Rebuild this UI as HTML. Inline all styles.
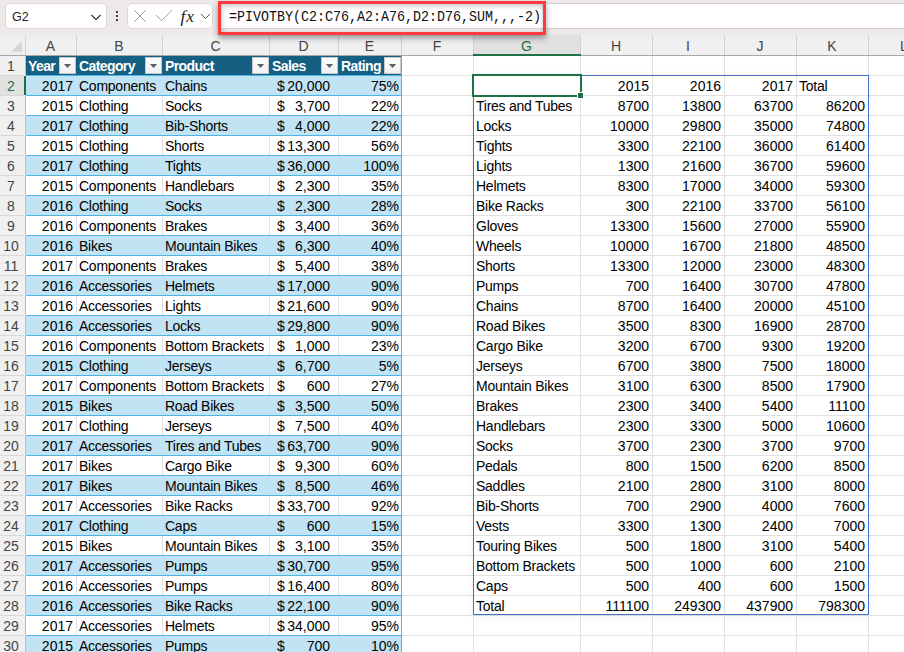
<!DOCTYPE html>
<html><head><meta charset="utf-8"><style>
html,body{margin:0;padding:0;}
body{width:904px;height:652px;overflow:hidden;position:relative;background:#fff;font-family:"Liberation Sans",sans-serif;color:#000;}
.a{position:absolute;}
.t{position:absolute;white-space:nowrap;font-size:14px;line-height:20px;height:20px;}
.tx{letter-spacing:-0.25px;}
.r{text-align:right;}
.hb{font-weight:bold;color:#fff;letter-spacing:-0.6px;}
.vl{position:absolute;width:1px;}
.hl{position:absolute;height:1px;}
</style></head><body>

<div class="a" style="left:0;top:0;width:904px;height:35px;background:#eee8e8"></div>
<div class="a" style="left:220px;top:3px;width:690px;height:24px;background:#fff;border-top:1px solid #d6d2d2;border-bottom:1px solid #d6d2d2"></div>
<div class="a" style="left:5px;top:3px;width:100px;height:24px;background:#fff;border:1px solid #dcd8d8;border-radius:5px"></div>
<div class="t" style="left:12px;top:6.5px;font-size:12.5px;color:#222">G2</div>
<svg class="a" style="left:90px;top:13px" width="12" height="9" viewBox="0 0 12 9"><path d="M1.5 2 L6 6.5 L10.5 2" fill="none" stroke="#333" stroke-width="1.2"/></svg>
<div class="a" style="left:116.2px;top:11.3px;width:2.2px;height:2.2px;background:#333;border-radius:0.5px"></div>
<div class="a" style="left:116.2px;top:15.3px;width:2.2px;height:2.2px;background:#333;border-radius:0.5px"></div>
<div class="a" style="left:116.2px;top:19.3px;width:2.2px;height:2.2px;background:#333;border-radius:0.5px"></div>
<div class="a" style="left:127px;top:3px;width:84px;height:24px;background:#fff;border:1px solid #dcd8d8;border-radius:5px"></div>
<svg class="a" style="left:130px;top:6px" width="84" height="20" viewBox="0 0 84 20"><path d="M4 4 L16 16 M16 4 L4 16" stroke="#9a9a9a" stroke-width="0.9" fill="none"/><path d="M26 9 L31.5 14.5 L42 4.2" stroke="#9a9a9a" stroke-width="0.9" fill="none"/><path d="M71 8 L75.5 12.5 L80 8" stroke="#555" stroke-width="1" fill="none"/></svg>
<div class="t" style="left:180px;top:4px;font-family:'Liberation Serif',serif;font-style:italic;font-size:17.5px;line-height:22px;height:22px;color:#1a1a1a;letter-spacing:0.8px;left:180.5px;top:4.5px">fx</div>
<div class="a" style="left:218px;top:1px;width:322px;height:28px;border:3px solid #fa3a3d;box-shadow:0 3px 6px rgba(0,0,0,0.38), inset 2px 3px 4px rgba(0,0,0,0.16), inset -2px 0 3px rgba(0,0,0,0.1);z-index:10"></div>
<div class="t" style="left:229px;top:8px;font-family:'Liberation Mono',monospace;font-size:13.33px;line-height:20px;color:#111;transform:scaleY(1.07);z-index:11">=PIVOTBY(C2:C76,A2:A76,D2:D76,SUM,,,-2)</div>
<div class="a" style="left:0;top:35px;width:904px;height:20px;background:#f0f0f0"></div>
<div class="a" style="left:473px;top:35px;width:107px;height:20px;background:#e1e1e1"></div>
<svg class="a" style="left:10px;top:40px" width="14" height="13"><path d="M1 12 L12 1 L12 12 Z" fill="#d7d7d7"/></svg>
<div class="vl" style="left:25px;top:36px;height:19px;background:#d0d0d0"></div>
<div class="t" style="left:25px;width:51px;top:36px;text-align:center;color:#444">A</div>
<div class="vl" style="left:76px;top:36px;height:19px;background:#d0d0d0"></div>
<div class="t" style="left:76px;width:86px;top:36px;text-align:center;color:#444">B</div>
<div class="vl" style="left:162px;top:36px;height:19px;background:#d0d0d0"></div>
<div class="t" style="left:162px;width:107px;top:36px;text-align:center;color:#444">C</div>
<div class="vl" style="left:269px;top:36px;height:19px;background:#d0d0d0"></div>
<div class="t" style="left:269px;width:69px;top:36px;text-align:center;color:#444">D</div>
<div class="vl" style="left:338px;top:36px;height:19px;background:#d0d0d0"></div>
<div class="t" style="left:338px;width:63px;top:36px;text-align:center;color:#444">E</div>
<div class="vl" style="left:401px;top:36px;height:19px;background:#d0d0d0"></div>
<div class="t" style="left:401px;width:72px;top:36px;text-align:center;color:#444">F</div>
<div class="vl" style="left:473px;top:36px;height:19px;background:#d0d0d0"></div>
<div class="t" style="left:473px;width:107px;top:36px;text-align:center;color:#217346">G</div>
<div class="vl" style="left:580px;top:36px;height:19px;background:#d0d0d0"></div>
<div class="t" style="left:580px;width:72px;top:36px;text-align:center;color:#444">H</div>
<div class="vl" style="left:652px;top:36px;height:19px;background:#d0d0d0"></div>
<div class="t" style="left:652px;width:72px;top:36px;text-align:center;color:#444">I</div>
<div class="vl" style="left:724px;top:36px;height:19px;background:#d0d0d0"></div>
<div class="t" style="left:724px;width:72px;top:36px;text-align:center;color:#444">J</div>
<div class="vl" style="left:796px;top:36px;height:19px;background:#d0d0d0"></div>
<div class="t" style="left:796px;width:72px;top:36px;text-align:center;color:#444">K</div>
<div class="vl" style="left:868px;top:36px;height:19px;background:#d0d0d0"></div>
<div class="t" style="left:868px;width:72px;top:36px;text-align:center;color:#444">L</div>
<div class="hl" style="left:0;top:55px;width:904px;background:#a8a8a8"></div>
<div class="a" style="left:473px;top:54px;width:108px;height:2px;background:#1e7145"></div>
<div class="a" style="left:0;top:56px;width:25px;height:600px;background:#f0f0f0"></div>
<div class="a" style="left:0;top:76px;width:25px;height:19px;background:#e1e1e1"></div>
<div class="vl" style="left:25px;top:56px;height:600px;background:#bdbdbd"></div>
<div class="a" style="left:24px;top:76px;width:2px;height:19px;background:#1e7145"></div>
<div class="hl" style="left:0;top:75px;width:24px;background:#d8d8d8"></div>
<div class="t" style="left:0;width:22px;top:56px;text-align:center;color:#444">1</div>
<div class="hl" style="left:0;top:95px;width:24px;background:#d8d8d8"></div>
<div class="t" style="left:0;width:22px;top:76px;text-align:center;color:#217346">2</div>
<div class="hl" style="left:0;top:115px;width:24px;background:#d8d8d8"></div>
<div class="t" style="left:0;width:22px;top:96px;text-align:center;color:#444">3</div>
<div class="hl" style="left:0;top:135px;width:24px;background:#d8d8d8"></div>
<div class="t" style="left:0;width:22px;top:116px;text-align:center;color:#444">4</div>
<div class="hl" style="left:0;top:155px;width:24px;background:#d8d8d8"></div>
<div class="t" style="left:0;width:22px;top:136px;text-align:center;color:#444">5</div>
<div class="hl" style="left:0;top:175px;width:24px;background:#d8d8d8"></div>
<div class="t" style="left:0;width:22px;top:156px;text-align:center;color:#444">6</div>
<div class="hl" style="left:0;top:195px;width:24px;background:#d8d8d8"></div>
<div class="t" style="left:0;width:22px;top:176px;text-align:center;color:#444">7</div>
<div class="hl" style="left:0;top:215px;width:24px;background:#d8d8d8"></div>
<div class="t" style="left:0;width:22px;top:196px;text-align:center;color:#444">8</div>
<div class="hl" style="left:0;top:235px;width:24px;background:#d8d8d8"></div>
<div class="t" style="left:0;width:22px;top:216px;text-align:center;color:#444">9</div>
<div class="hl" style="left:0;top:255px;width:24px;background:#d8d8d8"></div>
<div class="t" style="left:0;width:22px;top:236px;text-align:center;color:#444">10</div>
<div class="hl" style="left:0;top:275px;width:24px;background:#d8d8d8"></div>
<div class="t" style="left:0;width:22px;top:256px;text-align:center;color:#444">11</div>
<div class="hl" style="left:0;top:295px;width:24px;background:#d8d8d8"></div>
<div class="t" style="left:0;width:22px;top:276px;text-align:center;color:#444">12</div>
<div class="hl" style="left:0;top:315px;width:24px;background:#d8d8d8"></div>
<div class="t" style="left:0;width:22px;top:296px;text-align:center;color:#444">13</div>
<div class="hl" style="left:0;top:335px;width:24px;background:#d8d8d8"></div>
<div class="t" style="left:0;width:22px;top:316px;text-align:center;color:#444">14</div>
<div class="hl" style="left:0;top:355px;width:24px;background:#d8d8d8"></div>
<div class="t" style="left:0;width:22px;top:336px;text-align:center;color:#444">15</div>
<div class="hl" style="left:0;top:375px;width:24px;background:#d8d8d8"></div>
<div class="t" style="left:0;width:22px;top:356px;text-align:center;color:#444">16</div>
<div class="hl" style="left:0;top:395px;width:24px;background:#d8d8d8"></div>
<div class="t" style="left:0;width:22px;top:376px;text-align:center;color:#444">17</div>
<div class="hl" style="left:0;top:415px;width:24px;background:#d8d8d8"></div>
<div class="t" style="left:0;width:22px;top:396px;text-align:center;color:#444">18</div>
<div class="hl" style="left:0;top:435px;width:24px;background:#d8d8d8"></div>
<div class="t" style="left:0;width:22px;top:416px;text-align:center;color:#444">19</div>
<div class="hl" style="left:0;top:455px;width:24px;background:#d8d8d8"></div>
<div class="t" style="left:0;width:22px;top:436px;text-align:center;color:#444">20</div>
<div class="hl" style="left:0;top:475px;width:24px;background:#d8d8d8"></div>
<div class="t" style="left:0;width:22px;top:456px;text-align:center;color:#444">21</div>
<div class="hl" style="left:0;top:495px;width:24px;background:#d8d8d8"></div>
<div class="t" style="left:0;width:22px;top:476px;text-align:center;color:#444">22</div>
<div class="hl" style="left:0;top:515px;width:24px;background:#d8d8d8"></div>
<div class="t" style="left:0;width:22px;top:496px;text-align:center;color:#444">23</div>
<div class="hl" style="left:0;top:535px;width:24px;background:#d8d8d8"></div>
<div class="t" style="left:0;width:22px;top:516px;text-align:center;color:#444">24</div>
<div class="hl" style="left:0;top:555px;width:24px;background:#d8d8d8"></div>
<div class="t" style="left:0;width:22px;top:536px;text-align:center;color:#444">25</div>
<div class="hl" style="left:0;top:575px;width:24px;background:#d8d8d8"></div>
<div class="t" style="left:0;width:22px;top:556px;text-align:center;color:#444">26</div>
<div class="hl" style="left:0;top:595px;width:24px;background:#d8d8d8"></div>
<div class="t" style="left:0;width:22px;top:576px;text-align:center;color:#444">27</div>
<div class="hl" style="left:0;top:615px;width:24px;background:#d8d8d8"></div>
<div class="t" style="left:0;width:22px;top:596px;text-align:center;color:#444">28</div>
<div class="hl" style="left:0;top:635px;width:24px;background:#d8d8d8"></div>
<div class="t" style="left:0;width:22px;top:616px;text-align:center;color:#444">29</div>
<div class="hl" style="left:0;top:655px;width:24px;background:#d8d8d8"></div>
<div class="t" style="left:0;width:22px;top:636px;text-align:center;color:#444">30</div>
<div class="hl" style="left:25px;top:75px;width:879px;background:#e1e1e1"></div>
<div class="hl" style="left:25px;top:95px;width:879px;background:#e1e1e1"></div>
<div class="hl" style="left:25px;top:115px;width:879px;background:#e1e1e1"></div>
<div class="hl" style="left:25px;top:135px;width:879px;background:#e1e1e1"></div>
<div class="hl" style="left:25px;top:155px;width:879px;background:#e1e1e1"></div>
<div class="hl" style="left:25px;top:175px;width:879px;background:#e1e1e1"></div>
<div class="hl" style="left:25px;top:195px;width:879px;background:#e1e1e1"></div>
<div class="hl" style="left:25px;top:215px;width:879px;background:#e1e1e1"></div>
<div class="hl" style="left:25px;top:235px;width:879px;background:#e1e1e1"></div>
<div class="hl" style="left:25px;top:255px;width:879px;background:#e1e1e1"></div>
<div class="hl" style="left:25px;top:275px;width:879px;background:#e1e1e1"></div>
<div class="hl" style="left:25px;top:295px;width:879px;background:#e1e1e1"></div>
<div class="hl" style="left:25px;top:315px;width:879px;background:#e1e1e1"></div>
<div class="hl" style="left:25px;top:335px;width:879px;background:#e1e1e1"></div>
<div class="hl" style="left:25px;top:355px;width:879px;background:#e1e1e1"></div>
<div class="hl" style="left:25px;top:375px;width:879px;background:#e1e1e1"></div>
<div class="hl" style="left:25px;top:395px;width:879px;background:#e1e1e1"></div>
<div class="hl" style="left:25px;top:415px;width:879px;background:#e1e1e1"></div>
<div class="hl" style="left:25px;top:435px;width:879px;background:#e1e1e1"></div>
<div class="hl" style="left:25px;top:455px;width:879px;background:#e1e1e1"></div>
<div class="hl" style="left:25px;top:475px;width:879px;background:#e1e1e1"></div>
<div class="hl" style="left:25px;top:495px;width:879px;background:#e1e1e1"></div>
<div class="hl" style="left:25px;top:515px;width:879px;background:#e1e1e1"></div>
<div class="hl" style="left:25px;top:535px;width:879px;background:#e1e1e1"></div>
<div class="hl" style="left:25px;top:555px;width:879px;background:#e1e1e1"></div>
<div class="hl" style="left:25px;top:575px;width:879px;background:#e1e1e1"></div>
<div class="hl" style="left:25px;top:595px;width:879px;background:#e1e1e1"></div>
<div class="hl" style="left:25px;top:615px;width:879px;background:#e1e1e1"></div>
<div class="hl" style="left:25px;top:635px;width:879px;background:#e1e1e1"></div>
<div class="hl" style="left:25px;top:655px;width:879px;background:#e1e1e1"></div>
<div class="vl" style="left:76px;top:56px;height:600px;background:#e1e1e1"></div>
<div class="vl" style="left:162px;top:56px;height:600px;background:#e1e1e1"></div>
<div class="vl" style="left:269px;top:56px;height:600px;background:#e1e1e1"></div>
<div class="vl" style="left:338px;top:56px;height:600px;background:#e1e1e1"></div>
<div class="vl" style="left:401px;top:56px;height:600px;background:#e1e1e1"></div>
<div class="vl" style="left:473px;top:56px;height:600px;background:#e1e1e1"></div>
<div class="vl" style="left:580px;top:56px;height:600px;background:#e1e1e1"></div>
<div class="vl" style="left:652px;top:56px;height:600px;background:#e1e1e1"></div>
<div class="vl" style="left:724px;top:56px;height:600px;background:#e1e1e1"></div>
<div class="vl" style="left:796px;top:56px;height:600px;background:#e1e1e1"></div>
<div class="vl" style="left:868px;top:56px;height:600px;background:#e1e1e1"></div>
<div class="a" style="left:26px;top:56px;width:375px;height:20px;background:#156082"></div>
<div class="a" style="left:26px;top:76px;width:375px;height:20px;background:#c1e4f5"></div>
<div class="a" style="left:26px;top:116px;width:375px;height:20px;background:#c1e4f5"></div>
<div class="a" style="left:26px;top:156px;width:375px;height:20px;background:#c1e4f5"></div>
<div class="a" style="left:26px;top:196px;width:375px;height:20px;background:#c1e4f5"></div>
<div class="a" style="left:26px;top:236px;width:375px;height:20px;background:#c1e4f5"></div>
<div class="a" style="left:26px;top:276px;width:375px;height:20px;background:#c1e4f5"></div>
<div class="a" style="left:26px;top:316px;width:375px;height:20px;background:#c1e4f5"></div>
<div class="a" style="left:26px;top:356px;width:375px;height:20px;background:#c1e4f5"></div>
<div class="a" style="left:26px;top:396px;width:375px;height:20px;background:#c1e4f5"></div>
<div class="a" style="left:26px;top:436px;width:375px;height:20px;background:#c1e4f5"></div>
<div class="a" style="left:26px;top:476px;width:375px;height:20px;background:#c1e4f5"></div>
<div class="a" style="left:26px;top:516px;width:375px;height:20px;background:#c1e4f5"></div>
<div class="a" style="left:26px;top:556px;width:375px;height:20px;background:#c1e4f5"></div>
<div class="a" style="left:26px;top:596px;width:375px;height:20px;background:#c1e4f5"></div>
<div class="a" style="left:26px;top:636px;width:375px;height:20px;background:#c1e4f5"></div>
<div class="hl" style="left:26px;top:75px;width:376px;background:#4fb3e3"></div>
<div class="hl" style="left:26px;top:95px;width:376px;background:#4fb3e3"></div>
<div class="hl" style="left:26px;top:115px;width:376px;background:#4fb3e3"></div>
<div class="hl" style="left:26px;top:135px;width:376px;background:#4fb3e3"></div>
<div class="hl" style="left:26px;top:155px;width:376px;background:#4fb3e3"></div>
<div class="hl" style="left:26px;top:175px;width:376px;background:#4fb3e3"></div>
<div class="hl" style="left:26px;top:195px;width:376px;background:#4fb3e3"></div>
<div class="hl" style="left:26px;top:215px;width:376px;background:#4fb3e3"></div>
<div class="hl" style="left:26px;top:235px;width:376px;background:#4fb3e3"></div>
<div class="hl" style="left:26px;top:255px;width:376px;background:#4fb3e3"></div>
<div class="hl" style="left:26px;top:275px;width:376px;background:#4fb3e3"></div>
<div class="hl" style="left:26px;top:295px;width:376px;background:#4fb3e3"></div>
<div class="hl" style="left:26px;top:315px;width:376px;background:#4fb3e3"></div>
<div class="hl" style="left:26px;top:335px;width:376px;background:#4fb3e3"></div>
<div class="hl" style="left:26px;top:355px;width:376px;background:#4fb3e3"></div>
<div class="hl" style="left:26px;top:375px;width:376px;background:#4fb3e3"></div>
<div class="hl" style="left:26px;top:395px;width:376px;background:#4fb3e3"></div>
<div class="hl" style="left:26px;top:415px;width:376px;background:#4fb3e3"></div>
<div class="hl" style="left:26px;top:435px;width:376px;background:#4fb3e3"></div>
<div class="hl" style="left:26px;top:455px;width:376px;background:#4fb3e3"></div>
<div class="hl" style="left:26px;top:475px;width:376px;background:#4fb3e3"></div>
<div class="hl" style="left:26px;top:495px;width:376px;background:#4fb3e3"></div>
<div class="hl" style="left:26px;top:515px;width:376px;background:#4fb3e3"></div>
<div class="hl" style="left:26px;top:535px;width:376px;background:#4fb3e3"></div>
<div class="hl" style="left:26px;top:555px;width:376px;background:#4fb3e3"></div>
<div class="hl" style="left:26px;top:575px;width:376px;background:#4fb3e3"></div>
<div class="hl" style="left:26px;top:595px;width:376px;background:#4fb3e3"></div>
<div class="hl" style="left:26px;top:615px;width:376px;background:#4fb3e3"></div>
<div class="hl" style="left:26px;top:635px;width:376px;background:#4fb3e3"></div>
<div class="hl" style="left:26px;top:655px;width:376px;background:#4fb3e3"></div>
<div class="vl" style="left:401px;top:56px;height:600px;background:#4fb3e3"></div>
<div class="t hb" style="left:28px;top:56px">Year</div>
<div class="a" style="left:59px;top:57px;width:15px;height:15px;background:linear-gradient(#fdfdfd,#f0f1f3);border:1px solid #c8c6c6"></div>
<svg class="a" style="left:59px;top:57px" width="17" height="17"><path d="M4.9 7 L12.2 7 L8.55 10.9 Z" fill="#606060"/></svg>
<div class="t hb" style="left:79px;top:56px">Category</div>
<div class="a" style="left:145px;top:57px;width:15px;height:15px;background:linear-gradient(#fdfdfd,#f0f1f3);border:1px solid #c8c6c6"></div>
<svg class="a" style="left:145px;top:57px" width="17" height="17"><path d="M4.9 7 L12.2 7 L8.55 10.9 Z" fill="#606060"/></svg>
<div class="t hb" style="left:165px;top:56px">Product</div>
<div class="a" style="left:252px;top:57px;width:15px;height:15px;background:linear-gradient(#fdfdfd,#f0f1f3);border:1px solid #c8c6c6"></div>
<svg class="a" style="left:252px;top:57px" width="17" height="17"><path d="M4.9 7 L12.2 7 L8.55 10.9 Z" fill="#606060"/></svg>
<div class="t hb" style="left:272px;top:56px">Sales</div>
<div class="a" style="left:321px;top:57px;width:15px;height:15px;background:linear-gradient(#fdfdfd,#f0f1f3);border:1px solid #c8c6c6"></div>
<svg class="a" style="left:321px;top:57px" width="17" height="17"><path d="M4.9 7 L12.2 7 L8.55 10.9 Z" fill="#606060"/></svg>
<div class="t hb" style="left:341px;top:56px">Rating</div>
<div class="a" style="left:384px;top:57px;width:15px;height:15px;background:linear-gradient(#fdfdfd,#f0f1f3);border:1px solid #c8c6c6"></div>
<svg class="a" style="left:384px;top:57px" width="17" height="17"><path d="M4.9 7 L12.2 7 L8.55 10.9 Z" fill="#606060"/></svg>
<div class="t r" style="left:25px;width:48px;top:76px">2017</div>
<div class="t tx" style="left:79px;top:76px">Components</div>
<div class="t tx" style="left:165px;top:76px">Chains</div>
<div class="t" style="left:277px;top:76px">$</div>
<div class="t r" style="left:269px;width:61px;top:76px">20,000</div>
<div class="t r" style="left:338px;width:61px;top:76px">75%</div>
<div class="t r" style="left:25px;width:48px;top:96px">2015</div>
<div class="t tx" style="left:79px;top:96px">Clothing</div>
<div class="t tx" style="left:165px;top:96px">Socks</div>
<div class="t" style="left:277px;top:96px">$</div>
<div class="t r" style="left:269px;width:61px;top:96px">3,700</div>
<div class="t r" style="left:338px;width:61px;top:96px">22%</div>
<div class="t r" style="left:25px;width:48px;top:116px">2017</div>
<div class="t tx" style="left:79px;top:116px">Clothing</div>
<div class="t tx" style="left:165px;top:116px">Bib-Shorts</div>
<div class="t" style="left:277px;top:116px">$</div>
<div class="t r" style="left:269px;width:61px;top:116px">4,000</div>
<div class="t r" style="left:338px;width:61px;top:116px">22%</div>
<div class="t r" style="left:25px;width:48px;top:136px">2015</div>
<div class="t tx" style="left:79px;top:136px">Clothing</div>
<div class="t tx" style="left:165px;top:136px">Shorts</div>
<div class="t" style="left:277px;top:136px">$</div>
<div class="t r" style="left:269px;width:61px;top:136px">13,300</div>
<div class="t r" style="left:338px;width:61px;top:136px">56%</div>
<div class="t r" style="left:25px;width:48px;top:156px">2017</div>
<div class="t tx" style="left:79px;top:156px">Clothing</div>
<div class="t tx" style="left:165px;top:156px">Tights</div>
<div class="t" style="left:277px;top:156px">$</div>
<div class="t r" style="left:269px;width:61px;top:156px">36,000</div>
<div class="t r" style="left:338px;width:61px;top:156px">100%</div>
<div class="t r" style="left:25px;width:48px;top:176px">2015</div>
<div class="t tx" style="left:79px;top:176px">Components</div>
<div class="t tx" style="left:165px;top:176px">Handlebars</div>
<div class="t" style="left:277px;top:176px">$</div>
<div class="t r" style="left:269px;width:61px;top:176px">2,300</div>
<div class="t r" style="left:338px;width:61px;top:176px">35%</div>
<div class="t r" style="left:25px;width:48px;top:196px">2016</div>
<div class="t tx" style="left:79px;top:196px">Clothing</div>
<div class="t tx" style="left:165px;top:196px">Socks</div>
<div class="t" style="left:277px;top:196px">$</div>
<div class="t r" style="left:269px;width:61px;top:196px">2,300</div>
<div class="t r" style="left:338px;width:61px;top:196px">28%</div>
<div class="t r" style="left:25px;width:48px;top:216px">2016</div>
<div class="t tx" style="left:79px;top:216px">Components</div>
<div class="t tx" style="left:165px;top:216px">Brakes</div>
<div class="t" style="left:277px;top:216px">$</div>
<div class="t r" style="left:269px;width:61px;top:216px">3,400</div>
<div class="t r" style="left:338px;width:61px;top:216px">36%</div>
<div class="t r" style="left:25px;width:48px;top:236px">2016</div>
<div class="t tx" style="left:79px;top:236px">Bikes</div>
<div class="t tx" style="left:165px;top:236px">Mountain Bikes</div>
<div class="t" style="left:277px;top:236px">$</div>
<div class="t r" style="left:269px;width:61px;top:236px">6,300</div>
<div class="t r" style="left:338px;width:61px;top:236px">40%</div>
<div class="t r" style="left:25px;width:48px;top:256px">2017</div>
<div class="t tx" style="left:79px;top:256px">Components</div>
<div class="t tx" style="left:165px;top:256px">Brakes</div>
<div class="t" style="left:277px;top:256px">$</div>
<div class="t r" style="left:269px;width:61px;top:256px">5,400</div>
<div class="t r" style="left:338px;width:61px;top:256px">38%</div>
<div class="t r" style="left:25px;width:48px;top:276px">2016</div>
<div class="t tx" style="left:79px;top:276px">Accessories</div>
<div class="t tx" style="left:165px;top:276px">Helmets</div>
<div class="t" style="left:277px;top:276px">$</div>
<div class="t r" style="left:269px;width:61px;top:276px">17,000</div>
<div class="t r" style="left:338px;width:61px;top:276px">90%</div>
<div class="t r" style="left:25px;width:48px;top:296px">2016</div>
<div class="t tx" style="left:79px;top:296px">Accessories</div>
<div class="t tx" style="left:165px;top:296px">Lights</div>
<div class="t" style="left:277px;top:296px">$</div>
<div class="t r" style="left:269px;width:61px;top:296px">21,600</div>
<div class="t r" style="left:338px;width:61px;top:296px">90%</div>
<div class="t r" style="left:25px;width:48px;top:316px">2016</div>
<div class="t tx" style="left:79px;top:316px">Accessories</div>
<div class="t tx" style="left:165px;top:316px">Locks</div>
<div class="t" style="left:277px;top:316px">$</div>
<div class="t r" style="left:269px;width:61px;top:316px">29,800</div>
<div class="t r" style="left:338px;width:61px;top:316px">90%</div>
<div class="t r" style="left:25px;width:48px;top:336px">2016</div>
<div class="t tx" style="left:79px;top:336px">Components</div>
<div class="t tx" style="left:165px;top:336px">Bottom Brackets</div>
<div class="t" style="left:277px;top:336px">$</div>
<div class="t r" style="left:269px;width:61px;top:336px">1,000</div>
<div class="t r" style="left:338px;width:61px;top:336px">23%</div>
<div class="t r" style="left:25px;width:48px;top:356px">2015</div>
<div class="t tx" style="left:79px;top:356px">Clothing</div>
<div class="t tx" style="left:165px;top:356px">Jerseys</div>
<div class="t" style="left:277px;top:356px">$</div>
<div class="t r" style="left:269px;width:61px;top:356px">6,700</div>
<div class="t r" style="left:338px;width:61px;top:356px">5%</div>
<div class="t r" style="left:25px;width:48px;top:376px">2017</div>
<div class="t tx" style="left:79px;top:376px">Components</div>
<div class="t tx" style="left:165px;top:376px">Bottom Brackets</div>
<div class="t" style="left:277px;top:376px">$</div>
<div class="t r" style="left:269px;width:61px;top:376px">600</div>
<div class="t r" style="left:338px;width:61px;top:376px">27%</div>
<div class="t r" style="left:25px;width:48px;top:396px">2015</div>
<div class="t tx" style="left:79px;top:396px">Bikes</div>
<div class="t tx" style="left:165px;top:396px">Road Bikes</div>
<div class="t" style="left:277px;top:396px">$</div>
<div class="t r" style="left:269px;width:61px;top:396px">3,500</div>
<div class="t r" style="left:338px;width:61px;top:396px">50%</div>
<div class="t r" style="left:25px;width:48px;top:416px">2017</div>
<div class="t tx" style="left:79px;top:416px">Clothing</div>
<div class="t tx" style="left:165px;top:416px">Jerseys</div>
<div class="t" style="left:277px;top:416px">$</div>
<div class="t r" style="left:269px;width:61px;top:416px">7,500</div>
<div class="t r" style="left:338px;width:61px;top:416px">40%</div>
<div class="t r" style="left:25px;width:48px;top:436px">2017</div>
<div class="t tx" style="left:79px;top:436px">Accessories</div>
<div class="t tx" style="left:165px;top:436px">Tires and Tubes</div>
<div class="t" style="left:277px;top:436px">$</div>
<div class="t r" style="left:269px;width:61px;top:436px">63,700</div>
<div class="t r" style="left:338px;width:61px;top:436px">90%</div>
<div class="t r" style="left:25px;width:48px;top:456px">2017</div>
<div class="t tx" style="left:79px;top:456px">Bikes</div>
<div class="t tx" style="left:165px;top:456px">Cargo Bike</div>
<div class="t" style="left:277px;top:456px">$</div>
<div class="t r" style="left:269px;width:61px;top:456px">9,300</div>
<div class="t r" style="left:338px;width:61px;top:456px">60%</div>
<div class="t r" style="left:25px;width:48px;top:476px">2017</div>
<div class="t tx" style="left:79px;top:476px">Bikes</div>
<div class="t tx" style="left:165px;top:476px">Mountain Bikes</div>
<div class="t" style="left:277px;top:476px">$</div>
<div class="t r" style="left:269px;width:61px;top:476px">8,500</div>
<div class="t r" style="left:338px;width:61px;top:476px">46%</div>
<div class="t r" style="left:25px;width:48px;top:496px">2017</div>
<div class="t tx" style="left:79px;top:496px">Accessories</div>
<div class="t tx" style="left:165px;top:496px">Bike Racks</div>
<div class="t" style="left:277px;top:496px">$</div>
<div class="t r" style="left:269px;width:61px;top:496px">33,700</div>
<div class="t r" style="left:338px;width:61px;top:496px">92%</div>
<div class="t r" style="left:25px;width:48px;top:516px">2017</div>
<div class="t tx" style="left:79px;top:516px">Clothing</div>
<div class="t tx" style="left:165px;top:516px">Caps</div>
<div class="t" style="left:277px;top:516px">$</div>
<div class="t r" style="left:269px;width:61px;top:516px">600</div>
<div class="t r" style="left:338px;width:61px;top:516px">15%</div>
<div class="t r" style="left:25px;width:48px;top:536px">2015</div>
<div class="t tx" style="left:79px;top:536px">Bikes</div>
<div class="t tx" style="left:165px;top:536px">Mountain Bikes</div>
<div class="t" style="left:277px;top:536px">$</div>
<div class="t r" style="left:269px;width:61px;top:536px">3,100</div>
<div class="t r" style="left:338px;width:61px;top:536px">35%</div>
<div class="t r" style="left:25px;width:48px;top:556px">2017</div>
<div class="t tx" style="left:79px;top:556px">Accessories</div>
<div class="t tx" style="left:165px;top:556px">Pumps</div>
<div class="t" style="left:277px;top:556px">$</div>
<div class="t r" style="left:269px;width:61px;top:556px">30,700</div>
<div class="t r" style="left:338px;width:61px;top:556px">95%</div>
<div class="t r" style="left:25px;width:48px;top:576px">2016</div>
<div class="t tx" style="left:79px;top:576px">Accessories</div>
<div class="t tx" style="left:165px;top:576px">Pumps</div>
<div class="t" style="left:277px;top:576px">$</div>
<div class="t r" style="left:269px;width:61px;top:576px">16,400</div>
<div class="t r" style="left:338px;width:61px;top:576px">80%</div>
<div class="t r" style="left:25px;width:48px;top:596px">2016</div>
<div class="t tx" style="left:79px;top:596px">Accessories</div>
<div class="t tx" style="left:165px;top:596px">Bike Racks</div>
<div class="t" style="left:277px;top:596px">$</div>
<div class="t r" style="left:269px;width:61px;top:596px">22,100</div>
<div class="t r" style="left:338px;width:61px;top:596px">90%</div>
<div class="t r" style="left:25px;width:48px;top:616px">2017</div>
<div class="t tx" style="left:79px;top:616px">Accessories</div>
<div class="t tx" style="left:165px;top:616px">Helmets</div>
<div class="t" style="left:277px;top:616px">$</div>
<div class="t r" style="left:269px;width:61px;top:616px">34,000</div>
<div class="t r" style="left:338px;width:61px;top:616px">95%</div>
<div class="t r" style="left:25px;width:48px;top:636px">2015</div>
<div class="t tx" style="left:79px;top:636px">Accessories</div>
<div class="t tx" style="left:165px;top:636px">Pumps</div>
<div class="t" style="left:277px;top:636px">$</div>
<div class="t r" style="left:269px;width:61px;top:636px">700</div>
<div class="t r" style="left:338px;width:61px;top:636px">10%</div>
<div class="t tx" style="left:476px;top:96px">Tires and Tubes</div>
<div class="t r" style="left:580px;width:69px;top:96px">8700</div>
<div class="t r" style="left:652px;width:69px;top:96px">13800</div>
<div class="t r" style="left:724px;width:69px;top:96px">63700</div>
<div class="t r" style="left:796px;width:69px;top:96px">86200</div>
<div class="t tx" style="left:476px;top:116px">Locks</div>
<div class="t r" style="left:580px;width:69px;top:116px">10000</div>
<div class="t r" style="left:652px;width:69px;top:116px">29800</div>
<div class="t r" style="left:724px;width:69px;top:116px">35000</div>
<div class="t r" style="left:796px;width:69px;top:116px">74800</div>
<div class="t tx" style="left:476px;top:136px">Tights</div>
<div class="t r" style="left:580px;width:69px;top:136px">3300</div>
<div class="t r" style="left:652px;width:69px;top:136px">22100</div>
<div class="t r" style="left:724px;width:69px;top:136px">36000</div>
<div class="t r" style="left:796px;width:69px;top:136px">61400</div>
<div class="t tx" style="left:476px;top:156px">Lights</div>
<div class="t r" style="left:580px;width:69px;top:156px">1300</div>
<div class="t r" style="left:652px;width:69px;top:156px">21600</div>
<div class="t r" style="left:724px;width:69px;top:156px">36700</div>
<div class="t r" style="left:796px;width:69px;top:156px">59600</div>
<div class="t tx" style="left:476px;top:176px">Helmets</div>
<div class="t r" style="left:580px;width:69px;top:176px">8300</div>
<div class="t r" style="left:652px;width:69px;top:176px">17000</div>
<div class="t r" style="left:724px;width:69px;top:176px">34000</div>
<div class="t r" style="left:796px;width:69px;top:176px">59300</div>
<div class="t tx" style="left:476px;top:196px">Bike Racks</div>
<div class="t r" style="left:580px;width:69px;top:196px">300</div>
<div class="t r" style="left:652px;width:69px;top:196px">22100</div>
<div class="t r" style="left:724px;width:69px;top:196px">33700</div>
<div class="t r" style="left:796px;width:69px;top:196px">56100</div>
<div class="t tx" style="left:476px;top:216px">Gloves</div>
<div class="t r" style="left:580px;width:69px;top:216px">13300</div>
<div class="t r" style="left:652px;width:69px;top:216px">15600</div>
<div class="t r" style="left:724px;width:69px;top:216px">27000</div>
<div class="t r" style="left:796px;width:69px;top:216px">55900</div>
<div class="t tx" style="left:476px;top:236px">Wheels</div>
<div class="t r" style="left:580px;width:69px;top:236px">10000</div>
<div class="t r" style="left:652px;width:69px;top:236px">16700</div>
<div class="t r" style="left:724px;width:69px;top:236px">21800</div>
<div class="t r" style="left:796px;width:69px;top:236px">48500</div>
<div class="t tx" style="left:476px;top:256px">Shorts</div>
<div class="t r" style="left:580px;width:69px;top:256px">13300</div>
<div class="t r" style="left:652px;width:69px;top:256px">12000</div>
<div class="t r" style="left:724px;width:69px;top:256px">23000</div>
<div class="t r" style="left:796px;width:69px;top:256px">48300</div>
<div class="t tx" style="left:476px;top:276px">Pumps</div>
<div class="t r" style="left:580px;width:69px;top:276px">700</div>
<div class="t r" style="left:652px;width:69px;top:276px">16400</div>
<div class="t r" style="left:724px;width:69px;top:276px">30700</div>
<div class="t r" style="left:796px;width:69px;top:276px">47800</div>
<div class="t tx" style="left:476px;top:296px">Chains</div>
<div class="t r" style="left:580px;width:69px;top:296px">8700</div>
<div class="t r" style="left:652px;width:69px;top:296px">16400</div>
<div class="t r" style="left:724px;width:69px;top:296px">20000</div>
<div class="t r" style="left:796px;width:69px;top:296px">45100</div>
<div class="t tx" style="left:476px;top:316px">Road Bikes</div>
<div class="t r" style="left:580px;width:69px;top:316px">3500</div>
<div class="t r" style="left:652px;width:69px;top:316px">8300</div>
<div class="t r" style="left:724px;width:69px;top:316px">16900</div>
<div class="t r" style="left:796px;width:69px;top:316px">28700</div>
<div class="t tx" style="left:476px;top:336px">Cargo Bike</div>
<div class="t r" style="left:580px;width:69px;top:336px">3200</div>
<div class="t r" style="left:652px;width:69px;top:336px">6700</div>
<div class="t r" style="left:724px;width:69px;top:336px">9300</div>
<div class="t r" style="left:796px;width:69px;top:336px">19200</div>
<div class="t tx" style="left:476px;top:356px">Jerseys</div>
<div class="t r" style="left:580px;width:69px;top:356px">6700</div>
<div class="t r" style="left:652px;width:69px;top:356px">3800</div>
<div class="t r" style="left:724px;width:69px;top:356px">7500</div>
<div class="t r" style="left:796px;width:69px;top:356px">18000</div>
<div class="t tx" style="left:476px;top:376px">Mountain Bikes</div>
<div class="t r" style="left:580px;width:69px;top:376px">3100</div>
<div class="t r" style="left:652px;width:69px;top:376px">6300</div>
<div class="t r" style="left:724px;width:69px;top:376px">8500</div>
<div class="t r" style="left:796px;width:69px;top:376px">17900</div>
<div class="t tx" style="left:476px;top:396px">Brakes</div>
<div class="t r" style="left:580px;width:69px;top:396px">2300</div>
<div class="t r" style="left:652px;width:69px;top:396px">3400</div>
<div class="t r" style="left:724px;width:69px;top:396px">5400</div>
<div class="t r" style="left:796px;width:69px;top:396px">11100</div>
<div class="t tx" style="left:476px;top:416px">Handlebars</div>
<div class="t r" style="left:580px;width:69px;top:416px">2300</div>
<div class="t r" style="left:652px;width:69px;top:416px">3300</div>
<div class="t r" style="left:724px;width:69px;top:416px">5000</div>
<div class="t r" style="left:796px;width:69px;top:416px">10600</div>
<div class="t tx" style="left:476px;top:436px">Socks</div>
<div class="t r" style="left:580px;width:69px;top:436px">3700</div>
<div class="t r" style="left:652px;width:69px;top:436px">2300</div>
<div class="t r" style="left:724px;width:69px;top:436px">3700</div>
<div class="t r" style="left:796px;width:69px;top:436px">9700</div>
<div class="t tx" style="left:476px;top:456px">Pedals</div>
<div class="t r" style="left:580px;width:69px;top:456px">800</div>
<div class="t r" style="left:652px;width:69px;top:456px">1500</div>
<div class="t r" style="left:724px;width:69px;top:456px">6200</div>
<div class="t r" style="left:796px;width:69px;top:456px">8500</div>
<div class="t tx" style="left:476px;top:476px">Saddles</div>
<div class="t r" style="left:580px;width:69px;top:476px">2100</div>
<div class="t r" style="left:652px;width:69px;top:476px">2800</div>
<div class="t r" style="left:724px;width:69px;top:476px">3100</div>
<div class="t r" style="left:796px;width:69px;top:476px">8000</div>
<div class="t tx" style="left:476px;top:496px">Bib-Shorts</div>
<div class="t r" style="left:580px;width:69px;top:496px">700</div>
<div class="t r" style="left:652px;width:69px;top:496px">2900</div>
<div class="t r" style="left:724px;width:69px;top:496px">4000</div>
<div class="t r" style="left:796px;width:69px;top:496px">7600</div>
<div class="t tx" style="left:476px;top:516px">Vests</div>
<div class="t r" style="left:580px;width:69px;top:516px">3300</div>
<div class="t r" style="left:652px;width:69px;top:516px">1300</div>
<div class="t r" style="left:724px;width:69px;top:516px">2400</div>
<div class="t r" style="left:796px;width:69px;top:516px">7000</div>
<div class="t tx" style="left:476px;top:536px">Touring Bikes</div>
<div class="t r" style="left:580px;width:69px;top:536px">500</div>
<div class="t r" style="left:652px;width:69px;top:536px">1800</div>
<div class="t r" style="left:724px;width:69px;top:536px">3100</div>
<div class="t r" style="left:796px;width:69px;top:536px">5400</div>
<div class="t tx" style="left:476px;top:556px">Bottom Brackets</div>
<div class="t r" style="left:580px;width:69px;top:556px">500</div>
<div class="t r" style="left:652px;width:69px;top:556px">1000</div>
<div class="t r" style="left:724px;width:69px;top:556px">600</div>
<div class="t r" style="left:796px;width:69px;top:556px">2100</div>
<div class="t tx" style="left:476px;top:576px">Caps</div>
<div class="t r" style="left:580px;width:69px;top:576px">500</div>
<div class="t r" style="left:652px;width:69px;top:576px">400</div>
<div class="t r" style="left:724px;width:69px;top:576px">600</div>
<div class="t r" style="left:796px;width:69px;top:576px">1500</div>
<div class="t tx" style="left:476px;top:596px">Total</div>
<div class="t r" style="left:580px;width:69px;top:596px">111100</div>
<div class="t r" style="left:652px;width:69px;top:596px">249300</div>
<div class="t r" style="left:724px;width:69px;top:596px">437900</div>
<div class="t r" style="left:796px;width:69px;top:596px">798300</div>
<div class="t r" style="left:580px;width:69px;top:76px">2015</div>
<div class="t r" style="left:652px;width:69px;top:76px">2016</div>
<div class="t r" style="left:724px;width:69px;top:76px">2017</div>
<div class="t tx" style="left:799px;top:76px">Total</div>
<div class="a" style="left:473px;top:75px;width:394px;height:538px;border:1px solid #4472c4;box-shadow:0 1px 8px rgba(0,0,0,0.07)"></div>
<div class="a" style="left:472px;top:74px;width:106px;height:19px;border:2px solid #1e7145"></div>
<div class="a" style="left:577px;top:92px;width:5px;height:5px;background:#1e7145;border:1px solid #fff"></div>
</body></html>
